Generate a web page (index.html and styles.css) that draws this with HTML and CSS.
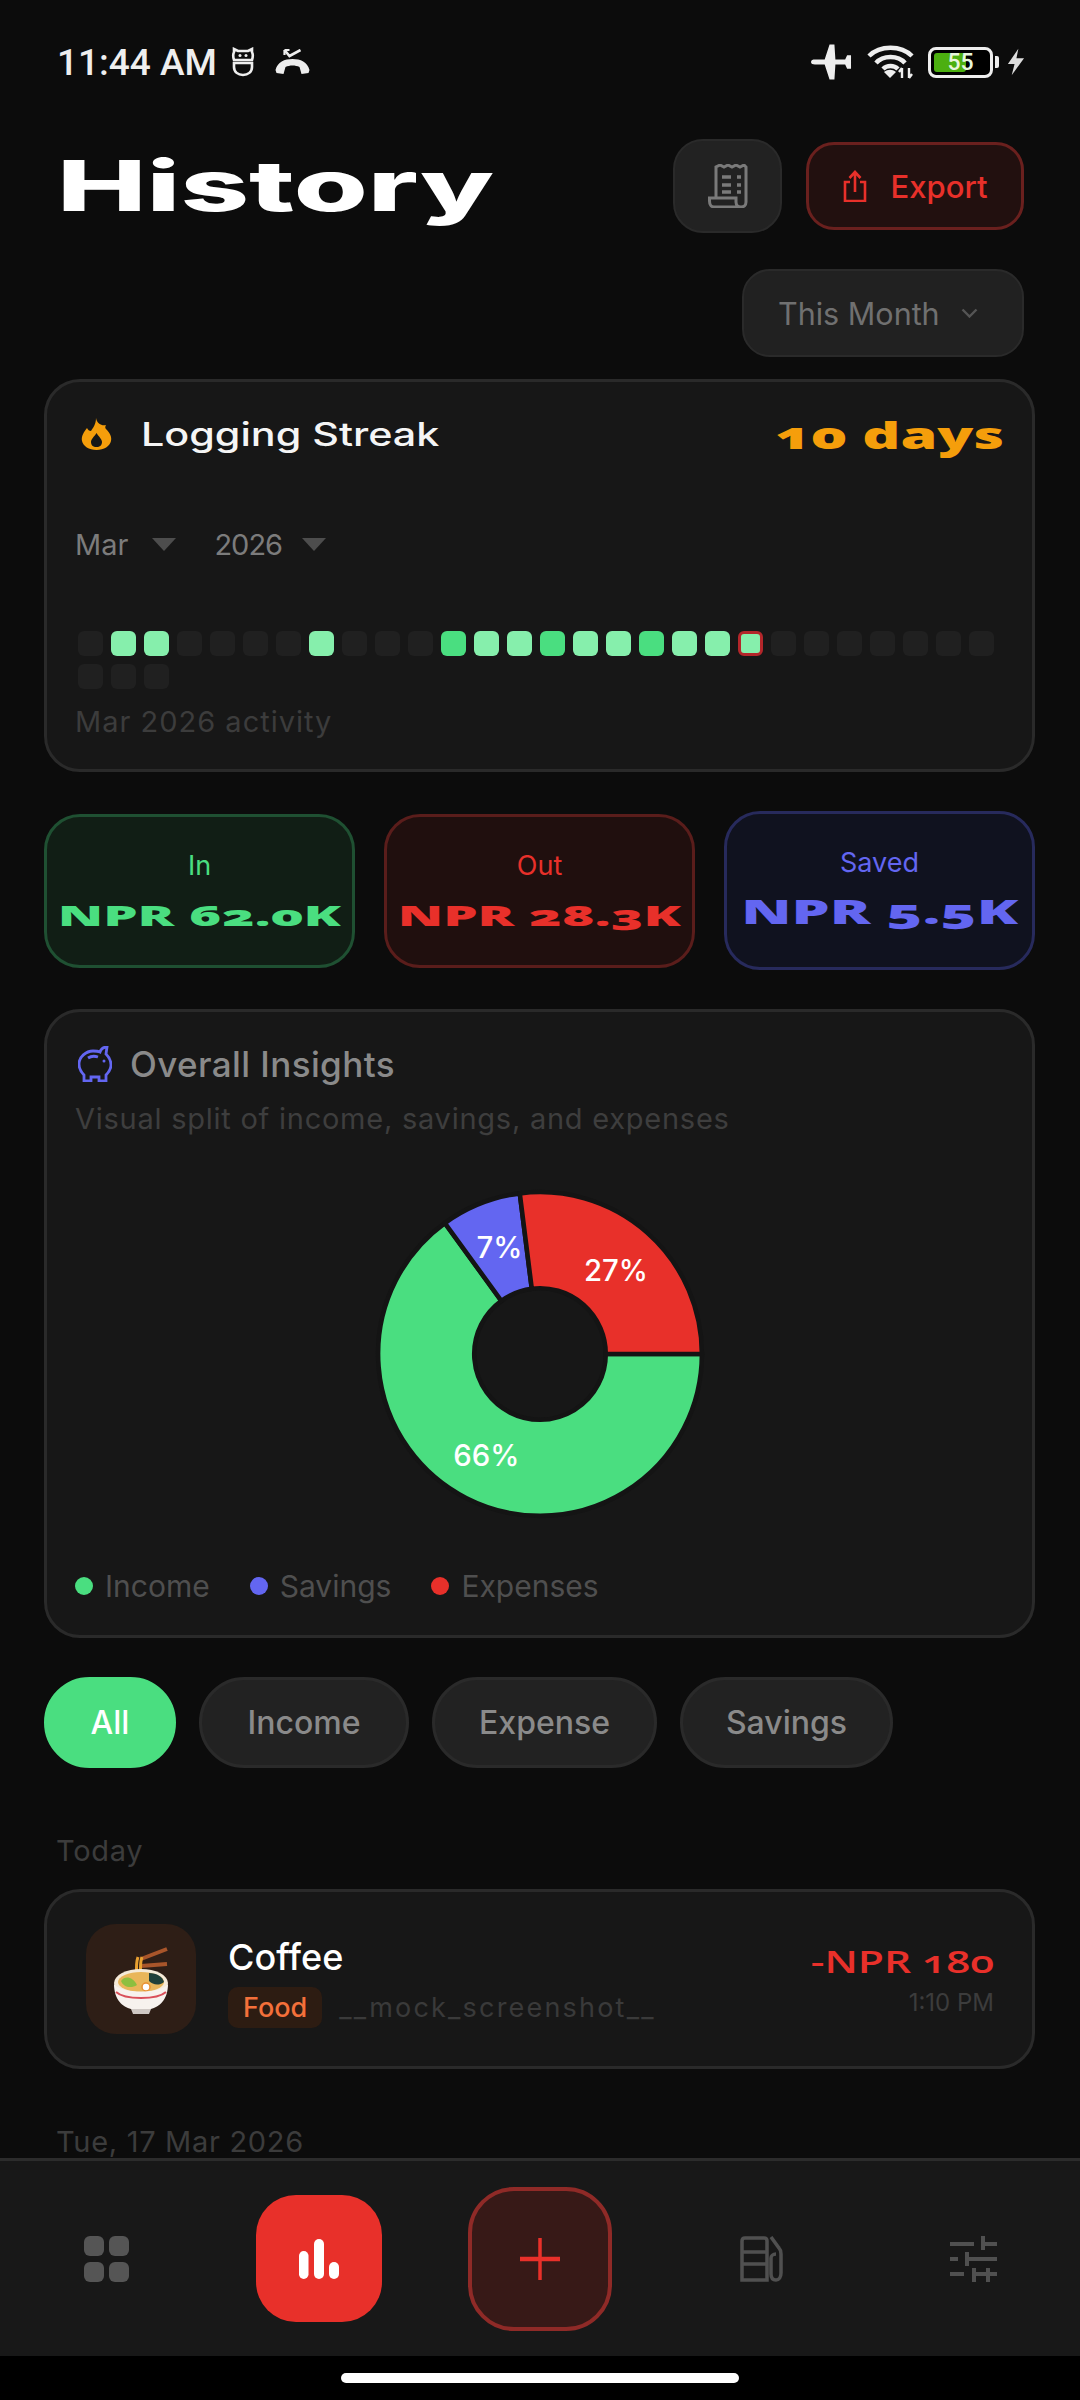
FILE: index.html
```html
<!DOCTYPE html>
<html lang="en">
<head>
<meta charset="utf-8">
<title>History</title>
<link rel="stylesheet" href="styles.css">
</head>
<body>
<div class="app">
  <main class="main">
    <div class="status">
      <div class="status-left">
        <span class="time">11:44 AM</span>
        <svg class="st-face" viewBox="0 0 24 30" fill="none" stroke="#eee" stroke-width="2.6"><path d="M3 5 L3 2 L7 4 H17 L21 2 V5 C22 7 22 10 21 13 H3 C2 10 2 7 3 5Z"/><path d="M3 16 V20 C3 25 7 28 12 28 C17 28 21 25 21 20 V16 Z"/><circle cx="9" cy="8.500" r="1.500" fill="#eee" stroke="none"/><circle cx="15" cy="8.500" r="1.500" fill="#eee" stroke="none"/></svg>
        <svg class="st-call" viewBox="0 0 36 26"><path d="M1 21 C3 13 10 10 18 10 C26 10 33 13 35 21 L34 24 L27 25 L25 18 C21 16 15 16 11 18 L9 25 L2 24Z" fill="#eee"/><path d="M10 1 L15 7 L26 1" fill="none" stroke="#eee" stroke-width="2.600"/><path d="M10 1 V6 M10 1 H15" stroke="#eee" stroke-width="2.200"/></svg>
      </div>
      <div class="status-right">
        <svg class="st-plane" viewBox="0 0 42 36"><path d="M0 18 C0 16 2 15.500 4 15.500 H14 L19 0 H24 L25 15.500 H35 L37 11 H41 V25 H37 L35 20.500 H25 L24 36 H19 L14 20.500 H4 C2 20.500 0 20 0 18Z" fill="#eee"/></svg>
        <svg class="st-wifi" viewBox="0 0 47 34" fill="none" stroke="#eee" stroke-width="4.500"><path d="M2 11 C13 0 34 0 45 11"/><path d="M9 18 C16 10 31 10 38 18"/><path d="M16 24 C20 20 27 20 31 24"/><path d="M17 27 L23 33 L29 27 C25 24 21 24 17 27Z" fill="#eee" stroke="none"/><path d="M35 23 V33 M32 27 L35 23 M42 33 V23 M45 29 L42 33" stroke-width="2.400"/></svg>
        <div class="battery"><span class="bat-fill"></span><span class="bat-num">55</span></div>
        <span class="bat-nub"></span>
        <svg class="st-bolt" viewBox="0 0 20 28"><path d="M13 0 L2 16 H9 L6 28 L19 10 H11Z" fill="#ddd"/></svg>
      </div>
    </div>

    <header class="head">
      <h1 class="title"><span class="title-in">History</span></h1>
      <div class="head-actions">
        <button class="icon-btn" aria-label="Receipts">
          <svg class="receipt" viewBox="0 0 40 44" fill="none" stroke="#7a7a7a" stroke-width="3"><path d="M8 34 V3 L12 1 L16 3 L20 1 L24 3 L28 1 L32 3 L36 1 L38 3 V38 C38 41 36 43 33 43 H6 C3 43 1.500 40 1.500 37 V34 H28 V38 C28 41 30 43 33 43"/><path d="M14 13 H23 M14 21 H23 M29 13 H33 M29 21 H33 M14 28 H23 M29 28 H33" stroke-width="3.500"/></svg>
        </button>
        <button class="export-btn">
          <svg class="share" viewBox="0 0 24 32" fill="none" stroke="#e8302a" stroke-width="2.600"><path d="M7 12 H2 V31 H22 V12 H17"/><path d="M12 22 V2 M6.500 8 L12 2 L17.500 8"/></svg>
          <span>Export</span>
        </button>
      </div>
    </header>

    <div class="period-row">
      <button class="period"><span>This Month</span>
        <svg class="chev" viewBox="0 0 17 10" fill="none" stroke="#555" stroke-width="2.400"><path d="M1.500 1.500 L8.500 8.500 L15.500 1.500"/></svg>
      </button>
    </div>

    <section class="card streak">
      <div class="streak-head">
        <svg class="flame" viewBox="0 0 31 32"><path fill-rule="evenodd" d="M15 0 C16 6 21 8 25 7 C24 9 24 10 25 11 C29 15 31 19 30 23 C29 28 23 32 15.500 32 C8 32 2 28 1 23 C0 18 3 14 6 10 C7 12 8 13 10 13 C12 10 15 6 15 0Z M15.500 15 C13 19 10 21 10 24 C10 27 12 29 15.500 29 C19 29 21 27 21 24 C21 21 18 19 15.500 15Z" fill="#f59e0b"/></svg>
        <span class="streak-title">Logging Streak</span>
        <span class="streak-days"><span class="wide-r">10 days</span></span>
      </div>
      <div class="selects">
        <span class="sel">Mar</span><i class="tri"></i>
        <span class="sel sel-year">2026</span><i class="tri tri-year"></i>
      </div>
      <div class="cells">
        <i class="cell"></i><i class="cell on"></i><i class="cell on"></i><i class="cell"></i><i class="cell"></i><i class="cell"></i><i class="cell"></i><i class="cell on"></i><i class="cell"></i><i class="cell"></i><i class="cell"></i><i class="cell max"></i><i class="cell on"></i><i class="cell on"></i><i class="cell max"></i><i class="cell on"></i><i class="cell on"></i><i class="cell max"></i><i class="cell on"></i><i class="cell on"></i><i class="cell on today"></i><i class="cell"></i><i class="cell"></i><i class="cell"></i><i class="cell"></i><i class="cell"></i><i class="cell"></i><i class="cell"></i><i class="cell"></i><i class="cell"></i><i class="cell"></i>
      </div>
      <div class="activity">Mar 2026 activity</div>
    </section>

    <section class="stats">
      <div class="stat stat-in"><div class="stat-label">In</div><div class="stat-value"><span class="wide-c">NPR 62.0K</span></div></div>
      <div class="stat stat-out"><div class="stat-label">Out</div><div class="stat-value"><span class="wide-c">NPR 28.3K</span></div></div>
      <div class="stat stat-saved"><div class="stat-label">Saved</div><div class="stat-value"><span class="wide-c">NPR 5.5K</span></div></div>
    </section>

    <section class="card insights">
      <div class="ins-head">
        <svg class="piggy" viewBox="0 0 34 36" fill="none" stroke="#6366f1" stroke-width="2.800"><path d="M22 6 C23 3 26 1 29 1 L28 8 C31 11 33 15 33 19 C33 24 30 27 28 29 V35 H21 V31 H13 V35 H6 V29 C3 26 1 23 1 18 C1 11 8 5 15 5 C18 5 20 5 22 6Z"/><path d="M10 12 C13 10 17 10 20 11"/><circle cx="26" cy="15" r="1.500" fill="#6366f1" stroke="none"/></svg>
        <span class="ins-title">Overall Insights</span>
      </div>
      <p class="ins-sub">Visual split of income, savings, and expenses</p>
      <svg class="pie" viewBox="0 0 340 340">
        <g stroke="#141414" stroke-width="4.500">
          <path fill="#4ade80" d="M330 170 A160 160 0 1 1 75.960 40.560 L131.800 117.440 A65 65 0 1 0 235 170Z"/>
          <path fill="#6366f1" d="M75.960 40.560 A160 160 0 0 1 150.010 11.250 L161.880 105.510 A65 65 0 0 0 131.800 117.440Z"/>
          <path fill="#e8302a" d="M150.010 11.250 A160 160 0 0 1 330 170 H235 A65 65 0 0 0 161.880 105.510Z"/>
        </g>
        <g class="pie-label" fill="#fff">
          <text x="245" y="87">27%</text>
          <text x="130" y="65">7%</text>
          <text x="117" y="270">66%</text>
        </g>
      </svg>
      <div class="legend">
        <span class="leg"><i class="dot dot-in"></i>Income</span>
        <span class="leg"><i class="dot dot-sv"></i>Savings</span>
        <span class="leg"><i class="dot dot-ex"></i>Expenses</span>
      </div>
    </section>

    <nav class="filters">
      <button class="chip chip-on">All</button>
      <button class="chip chip-income">Income</button>
      <button class="chip chip-expense">Expense</button>
      <button class="chip chip-savings">Savings</button>
    </nav>

    <div class="day day-first">Today</div>
    <article class="card tx">
      <div class="tx-icon">
        <svg class="bowl" viewBox="0 0 56 68">
          <path d="M28 12 L54 2 M28 19 L54 17" stroke="#a8552a" stroke-width="4" fill="none"/>
          <path d="M25 10 C22 18 24 28 24 36 M29 10 C26 18 28 28 28 36" stroke="#e8a030" stroke-width="3" fill="none"/>
          <ellipse cx="28" cy="36" rx="27" ry="14" fill="#f5ead8"/>
          <ellipse cx="28" cy="35" rx="23" ry="10" fill="#e9b65a"/>
          <path d="M36 26 C44 26 50 30 51 35 C46 39 40 38 36 34Z" fill="#20403a"/>
          <path d="M8 34 C12 28 20 30 24 38 C18 42 10 40 8 34Z" fill="#8dbf3f"/>
          <circle cx="33" cy="40" r="4" fill="#fff" stroke="#e89030" stroke-width="1.500"/>
          <path d="M1 37 C1 53 10 60 18 62 H38 C46 60 55 53 55 37 C48 47 8 47 1 37Z" fill="#f7f2ee"/>
          <path d="M3 45 C12 53 44 53 53 45" stroke="#d9505a" stroke-width="2" fill="none"/>
          <path d="M18 62 H38 L36 67 H20Z" fill="#cfc8c4"/>
        </svg>
      </div>
      <div class="tx-main">
        <div class="tx-name">Coffee</div>
        <div class="tx-meta"><span class="tag">Food</span><span class="tx-note">__mock_screenshot__</span></div>
      </div>
      <div class="tx-side">
        <div class="tx-amount"><span class="wide-r">-NPR 180</span></div>
        <div class="tx-time">1:10 PM</div>
      </div>
    </article>
    <div class="day day-second">Tue, 17 Mar 2026</div>
  </main>

  <footer class="nav">
    <div class="nav-cell">
      <svg class="nav-grid" viewBox="0 0 45 46" fill="#555"><rect width="20" height="20" rx="6"/><rect x="25" width="20" height="20" rx="6"/><rect y="26" width="20" height="20" rx="6"/><rect x="25" y="26" width="20" height="20" rx="6"/></svg>
    </div>
    <div class="nav-cell">
      <div class="nav-active">
        <svg class="nav-bars" viewBox="0 0 40 40" fill="#fff"><rect y="12" width="9.500" height="28" rx="4.700"/><rect x="15" width="10" height="40" rx="5"/><rect x="30" y="23" width="10" height="17" rx="5"/></svg>
      </div>
    </div>
    <div class="nav-cell">
      <div class="nav-add">
        <svg class="nav-plus" viewBox="0 0 40 42" stroke="#e8302a" fill="none"><path d="M20 0 V42" stroke-width="3.500"/><path d="M0 21 H40" stroke-width="4.500"/></svg>
      </div>
    </div>
    <div class="nav-cell">
      <svg class="nav-fuel" viewBox="0 0 43 46" fill="none" stroke="#505050" stroke-width="3.500"><path d="M2 44 V5 C2 3 3 2 5 2 H24 C26 2 27 3 27 5 V44 Z"/><path d="M2 16 H27 M2 28 H27"/><path d="M31 1 L39 12 C41 14 41 16 41 18 V37 C41 41 39 44 36 44 C33 44 31 42 31 38 V22 C31 20 33 18 36 18"/></svg>
    </div>
    <div class="nav-cell">
      <svg class="nav-sliders" viewBox="0 0 47 46" fill="none" stroke="#505050" stroke-width="4"><path d="M0 8 H24 M33 8 H47 M33 0 V14 M0 23 H8 M17 23 H47 M17 16 V30 M0 38 H14 M24 38 H47 M24 32 V46 M38 32 V46"/></svg>
    </div>
  </footer>
  <div class="home"><span class="home-bar"></span></div>
</div>
</body>
</html>
```

FILE: styles.css
```css
* { box-sizing: border-box; }
html, body { margin: 0; padding: 0; background: #0c0c0c; }
body { width: 1080px; height: 2400px; overflow: hidden; font-family: "Inter", "Open Sans", sans-serif; }
button { font: inherit; }
.app { width: 1080px; height: 2400px; display: flex; flex-direction: column; }
.main { flex: 1; min-height: 0; overflow: hidden; padding: 0 45px 0 44px; }

.status { height: 120px; padding-top: 4px; display: flex; justify-content: space-between; align-items: center; margin: 0 10px 0 13px; }
.status-left, .status-right { display: flex; align-items: center; }
.time { font-family: "Roboto", sans-serif; font-weight: 500; font-size: 37px; color: #eee; }
.st-face { width: 24px; height: 30px; margin-left: 14px; }
.st-call { width: 37px; height: 26px; margin-left: 19px; }
.st-plane { width: 41px; height: 36px; }
.st-wifi { width: 47px; height: 34px; margin-left: 15px; }
.battery { position: relative; width: 65px; height: 31px; margin-left: 14px; border: 3px solid #eee; border-radius: 8px; background: #000; overflow: hidden; }
.bat-fill { position: absolute; left: 3px; top: 3px; bottom: 3px; width: 32px; border-radius: 3px; background: #4caf10; }
.bat-num { position: absolute; inset: 0; text-align: center; font: 500 23px/25px "Roboto", sans-serif; color: #e8f5dc; }
.bat-nub { width: 4px; height: 12px; margin-left: 2px; background: #eee; border-radius: 0 2px 2px 0; }
.st-bolt { width: 19px; height: 28px; margin-left: 7px; }

.head { margin: 19px 11px 0 13px; display: flex; justify-content: space-between; align-items: center; }
.title { margin: 0; height: 94px; display: flex; align-items: center; }
.title-in { display: inline-block; font: 800 70px/1 "Inter", sans-serif; color: #fff; transform: scaleX(1.71); transform-origin: left center; }
.head-actions { display: flex; align-items: center; gap: 24px; }
.icon-btn { width: 109px; height: 94px; padding: 0; border-radius: 30px; background: #222; border: 2px solid #2a2a2a; display: flex; align-items: center; justify-content: center; }
.receipt { width: 40px; height: 44px; }
.export-btn { width: 218px; height: 88px; padding: 0; border-radius: 28px; background: #22100f; border: 3px solid #6a201e; color: #e8302a; font-size: 31px; font-weight: 500; display: flex; align-items: center; justify-content: center; gap: 24px; }
.share { width: 24px; height: 32px; }

.period-row { margin: 36px 11px 0 0; display: flex; justify-content: flex-end; }
.period { width: 282px; height: 88px; padding: 0 0 0 34px; border-radius: 28px; background: #212121; border: 2px solid #2a2a2a; color: #707070; font-size: 30.500px; display: flex; align-items: center; gap: 21px; }
.chev { width: 17px; height: 10px; }

.card { background: #171717; border: 3px solid #2a2a2a; border-radius: 36px; }
.streak { margin-top: 22px; height: 393px; padding: 30px 28px 0 28px; }
.streak-head { display: flex; align-items: center; height: 44px; }
.flame { width: 31px; height: 32px; margin-left: 6px; }
.streak-title { display: inline-block; margin-left: 29px; font-size: 32px; font-weight: 500; color: #f5f5f5; transform: scaleX(1.29); transform-origin: left center; }
.streak-days { margin-left: auto; font: 800 37px/1 "Open Sans", sans-serif; font-feature-settings: "onum"; color: #f59e0b; }
.wide-r { display: inline-block; transform: scaleX(1.6); transform-origin: right center; }
.wide-c { display: inline-block; transform: scaleX(1.88); transform-origin: center; white-space: nowrap; }
.selects { margin-top: 68px; display: flex; align-items: center; height: 40px; }
.sel { font-size: 29px; color: #7c7c7c; }
.sel-year { margin-left: 38px; letter-spacing: -1px; }
.tri { width: 0; height: 0; margin-left: 24px; border-left: 12px solid transparent; border-right: 12px solid transparent; border-top: 13px solid #4d4d4d; }
.tri-year { margin-left: 20px; }
.cells { margin: 67px 0 0 3px; display: flex; flex-wrap: wrap; gap: 8px; }
.cell { width: 25px; height: 25px; border-radius: 6px; background: #202020; }
.on { background: #86efac; }
.max { background: #4ade80; }
.today { border: 3px solid #b3262a; }
.activity { margin-top: 15px; font-size: 29px; color: #3c3c3c; letter-spacing: 1px; }

.stats { margin-top: 39px; display: grid; grid-template-columns: repeat(3, 311px); gap: 29px; align-items: center; }
.stat { border-radius: 36px; border: 3px solid; display: flex; flex-direction: column; align-items: center; justify-content: center; height: 154px; }
.stat-label { font-size: 27px; line-height: 34px; }
.stat-value { margin-top: 14px; font: 800 29px/36px "Open Sans", sans-serif; font-feature-settings: "onum"; }
.stat-in { background: #111e15; border-color: #1f5032; color: #4ade80; }
.stat-out { background: #200f0e; border-color: #5a1d1b; color: #e8302a; }
.stat-saved { height: 159px; padding-bottom: 6px; background: #10121f; border-color: #272a5c; color: #6366f1; }
.stat-saved .stat-value { font-size: 33px; }
.stat-saved .wide-c { transform: scaleX(1.83); }

.insights { margin-top: 39px; height: 629px; padding: 29px 28px 0; }
.ins-head { display: flex; align-items: center; height: 46px; }
.piggy { width: 34px; height: 36px; margin-left: 3px; }
.ins-title { margin-left: 18px; font-size: 35px; font-weight: 500; color: #8a8a8a; letter-spacing: .4px; }
.ins-sub { margin: 12px 0 0; font-size: 29px; line-height: 40px; color: #3e3e3e; letter-spacing: .75px; }
.pie { display: block; width: 344px; height: 344px; margin: 43px auto 0; }
.pie-label { font: 500 29px "Inter", sans-serif; text-anchor: middle; dominant-baseline: central; }
.legend { margin-top: 42px; display: flex; gap: 40px; }
.leg { display: flex; align-items: center; gap: 12px; font-size: 30px; color: #4f4f4f; }
.dot { width: 18px; height: 18px; border-radius: 50%; }
.dot-in { background: #4ade80; }
.dot-sv { background: #6366f1; }
.dot-ex { background: #e8302a; }

.filters { margin-top: 39px; display: flex; gap: 23px; height: 91px; }
.chip { height: 91px; padding: 0; border-radius: 46px; background: #222; border: 3px solid #2a2a2a; color: #8a8a8a; font-size: 32px; font-weight: 500; }
.chip-on { width: 132px; background: #4ade80; border-color: #4ade80; color: #fff; }
.chip-income { width: 210px; }
.chip-expense { width: 225px; }
.chip-savings { width: 213px; }

.day { margin-left: 12px; font-size: 29px; line-height: 40px; color: #3c3c3c; letter-spacing: .7px; }
.day-first { margin-top: 63px; }
.day-second { margin-top: 53px; }
.tx { margin-top: 18px; height: 180px; padding: 0 38px 0 39px; display: flex; align-items: center; }
.tx-icon { width: 110px; height: 110px; border-radius: 30px; background: #2e1e16; display: flex; align-items: center; justify-content: center; }
.bowl { width: 56px; height: 68px; margin-top: 4px; }
.tx-main { margin-left: 32px; padding-top: 4px; }
.tx-name { font-size: 36px; font-weight: 500; line-height: 44px; color: #fff; }
.tx-meta { margin-top: 8px; display: flex; align-items: center; gap: 17px; }
.tag { height: 41px; line-height: 41px; padding: 0 15px; border-radius: 10px; background: #2d1c12; color: #f4703a; font-size: 27px; font-weight: 500; }
.tx-note { font-size: 27px; color: #3a3a3a; letter-spacing: 2.200px; }
.tx-side { margin-left: auto; text-align: right; }
.tx-amount { font: 600 30px/40px "Open Sans", sans-serif; font-feature-settings: "onum"; color: #e8302a; }
.tx-amount .wide-r { transform: scaleX(1.42); }
.tx-time { margin-top: 6px; font-size: 24px; color: #3c3c3c; }

.nav { height: 198px; flex: none; background: #181818; border-top: 3px solid #2c2c2c; display: grid; grid-template-columns: 212px 214px 228px 214px 210px; align-items: center; }
.nav-cell { display: flex; align-items: center; justify-content: center; }
.nav-grid { width: 45px; height: 46px; }
.nav-active { width: 126px; height: 127px; border-radius: 40px; background: #e8302a; display: flex; align-items: center; justify-content: center; }
.nav-bars { width: 40px; height: 40px; }
.nav-add { width: 144px; height: 144px; border-radius: 46px; background: #371917; border: 4px solid #8f2a27; display: flex; align-items: center; justify-content: center; }
.nav-plus { width: 40px; height: 42px; }
.nav-fuel { width: 43px; height: 46px; }
.nav-sliders { width: 47px; height: 46px; }
.home { height: 44px; flex: none; background: #000; display: flex; justify-content: center; padding-top: 17px; }
.home-bar { width: 398px; height: 10px; border-radius: 5px; background: #fff; }
```
